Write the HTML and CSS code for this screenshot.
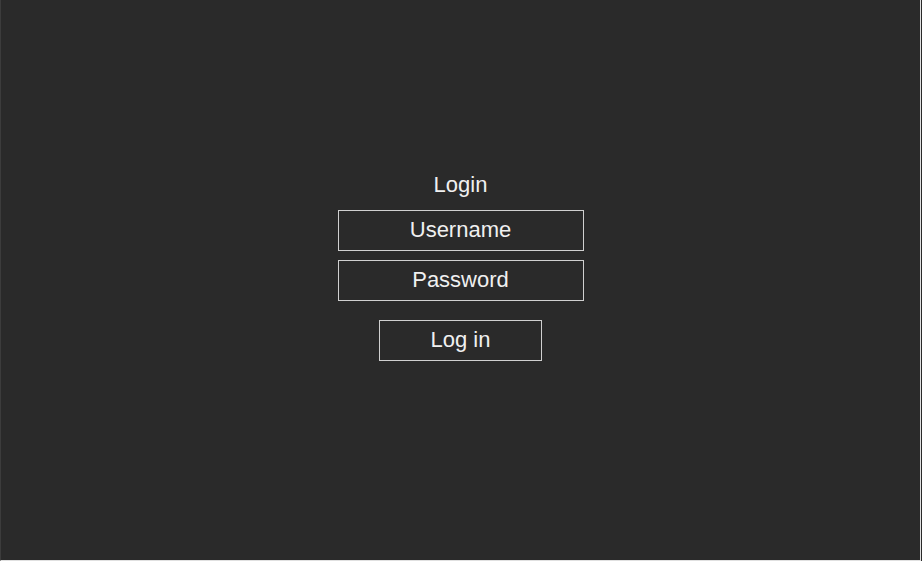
FILE: index.html
```html
<!DOCTYPE html>
<html>
<head>
<meta charset="utf-8">
<link rel="stylesheet" href="styles.css">
</head>
<body>
<div class="screen">
  <div class="login">
    <div class="title">Login</div>
    <div class="field">Username</div>
    <div class="field">Password</div>
    <div class="btn">Log in</div>
  </div>
</div>
</body>
</html>
```
FILE: styles.css
```css
html, body { margin: 0; padding: 0; background: #2a2a2a; }
body { width: 922px; height: 561px; overflow: hidden; }
.screen {
  width: 919px;
  height: 560px;
  background: #2a2a2a;
  border-left: 1px solid #3c3c3c;
  border-right: 1px solid #e0e0e0;
  border-bottom: 1px solid #e0e0e0;
  display: flex;
  justify-content: center;
  align-items: flex-start;
  font-family: "Liberation Sans", Arial, sans-serif;
  color: #f0f0f0;
}
.login {
  margin-top: 171px;
  display: flex;
  flex-direction: column;
  align-items: center;
}
.title {
  font-size: 22px;
  line-height: 28px;
  margin-bottom: 11px;
}
.field, .btn {
  box-sizing: border-box;
  height: 41px;
  border: 1px solid #d0d0d0;
  font-size: 22px;
  display: flex;
  align-items: center;
  justify-content: center;
  padding-bottom: 1px;
}
.field { width: 246px; margin-bottom: 9px; }
.btn { width: 163px; margin-top: 10px; }
```
